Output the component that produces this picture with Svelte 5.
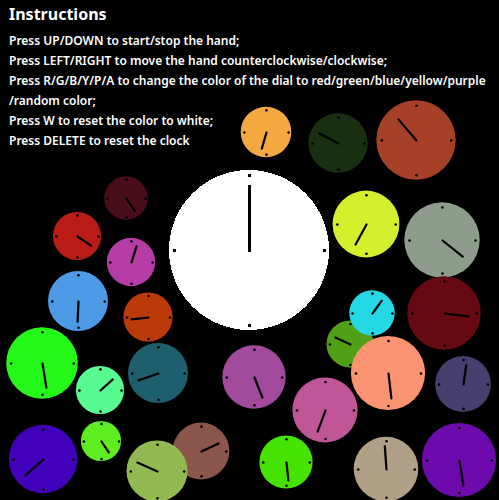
<script>
  // Each dial: centre, radius, fill and the tip of its hand.
  const dials = [
    { x: 266, y: 132, r: 25.3, fill: '#f6a840', tip: [261.8, 148.6] },
    { x: 338, y: 143, r: 29.7, fill: '#182f12', tip: [319, 133.2] },
    { x: 416, y: 140, r: 39.7, fill: '#a64127', tip: [398.4, 119.4] },
    { x: 126, y: 198, r: 21.7, fill: '#4a0e1a', tip: [134.8, 210.8] },
    { x: 77, y: 236, r: 24.1, fill: '#b91b15', tip: [91, 245.6] },
    { x: 131, y: 262, r: 24.2, fill: '#b53da5', tip: [136.6, 246.2] },
    { x: 366, y: 224, r: 33.4, fill: '#d3ef2d', tip: [355.6, 244.6] },
    { x: 442, y: 240, r: 37.7, fill: '#8e9c8b', tip: [462.8, 256.6] },
    { x: 78, y: 301, r: 30, fill: '#4d9ae7', tip: [77.6, 321.8] },
    { x: 148, y: 317, r: 24.6, fill: '#bc390a', tip: [131.6, 319.4] },
    { x: 42, y: 363, r: 35.8, fill: '#24f819', tip: [46.4, 387.6] },
    { x: 100, y: 390, r: 24.1, fill: '#58fb92', tip: [112.8, 379.4] },
    { x: 158, y: 373, r: 30, fill: '#1e5f6e', tip: [138.4, 380.4] },
    { x: 350, y: 344, r: 23.5, fill: '#50a017', tip: [335.4, 337.4] },
    { x: 372, y: 313, r: 22.7, fill: '#24d9e5', tip: [381.8, 300.6] },
    { x: 444, y: 313, r: 36.7, fill: '#670912', tip: [468.8, 316.4] },
    { x: 388, y: 373, r: 37.1, fill: '#fc9474', tip: [391.4, 398.4] },
    { x: 463, y: 384, r: 27.9, fill: '#483f6f', tip: [466.2, 365.4] },
    { x: 43, y: 459, r: 34.2, fill: '#4201bb', tip: [25.4, 475.4] },
    { x: 101, y: 441, r: 20.1, fill: '#5ded20', tip: [108.8, 452.4] },
    { x: 201, y: 451, r: 28.4, fill: '#8c564c', tip: [218.6, 443.4] },
    { x: 157, y: 471, r: 30.5, fill: '#93b953', tip: [137.4, 462.6] },
    { x: 254, y: 377, r: 31.7, fill: '#a24b9d', tip: [262.4, 397.6] },
    { x: 325, y: 410, r: 32.6, fill: '#c05598', tip: [317.6, 431.6] },
    { x: 286, y: 462, r: 26.6, fill: '#47e300', tip: [288.4, 480.6] },
    { x: 386, y: 469, r: 32.3, fill: '#b0a088', tip: [384.8, 446.2] },
    { x: 459, y: 460, r: 37.1, fill: '#6d0aae', tip: [463.4, 485.6] }
  ];

  const directions = [[0, -1], [1, 0], [0, 1], [-1, 0]];
</script>

<main>
  <svg viewBox="0 0 499 500" role="img" aria-label="Clocks">
    {#each dials as d}
      <circle cx={d.x} cy={d.y} r={d.r} fill={d.fill} />
      {#each directions as [dx, dy]}
        <circle cx={d.x + 0.5 + dx * d.r * 0.875} cy={d.y + 0.5 + dy * d.r * 0.875} r="1.3" />
      {/each}
      <line class="hand" x1={d.x + 0.5} y1={d.y + 0.5} x2={d.tip[0]} y2={d.tip[1]} />
    {/each}

    <g shape-rendering="crispEdges">
      <circle cx="249" cy="250" r="80" fill="#fff" />
      {#each directions as [dx, dy]}
        <rect x={248 + dx * 75} y={249 + dy * 75} width="3" height="3" />
      {/each}
      <rect x="248" y="185" width="3" height="67" />
    </g>
  </svg>

  <section>
    <h1>Instructions</h1>
    <p>Press UP/DOWN to start/stop the hand;</p>
    <p>Press LEFT/RIGHT to move the hand counterclockwise/clockwise;</p>
    <p>
      Press R/G/B/Y/P/A to change the color of the dial to red/green/blue/yellow/purple<br />/random color;
    </p>
    <p>Press W to reset the color to white;</p>
    <p>Press DELETE to reset the clock</p>
  </section>
</main>

<style>
  :global(body) {
    background: #000;
  }

  main {
    position: relative;
    overflow: hidden;
    background: #000;
  }

  svg {
    display: block;
    width: 100%;
  }

  .hand {
    stroke: #000;
    stroke-width: 2.2;
    stroke-linecap: round;
  }

  section {
    position: absolute;
    top: 0;
    left: 9px;
    padding-top: 2px;
    color: #fff;
    font-family: 'Noto Sans', 'Open Sans', sans-serif;
    white-space: nowrap;
  }

  h1 {
    margin: 0 0 5px;
    font-size: 16px;
    font-weight: 700;
    line-height: 24px;
  }

  p {
    margin: 0;
    font-size: 12px;
    font-weight: 600;
    line-height: 20px;
  }
</style>
